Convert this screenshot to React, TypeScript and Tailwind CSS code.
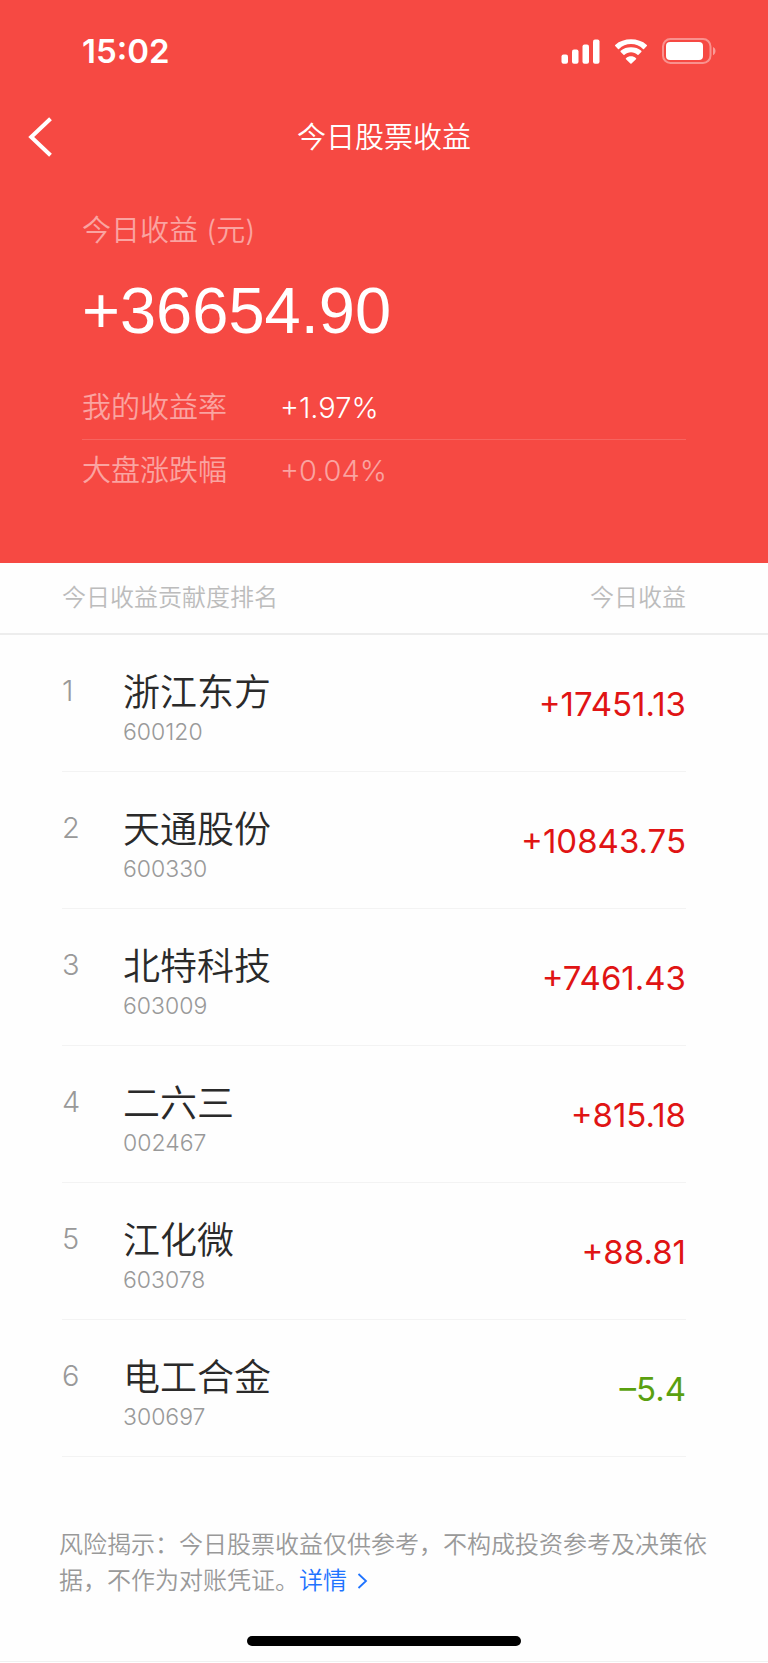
const stocks = [
  { name: '浙江东方', code: '600120', profit: '+17451.13' },
  { name: '天通股份', code: '600330', profit: '+10843.75' },
  { name: '北特科技', code: '603009', profit: '+7461.43' },
  { name: '二六三', code: '002467', profit: '+815.18' },
  { name: '江化微', code: '603078', profit: '+88.81' },
  { name: '电工合金', code: '300697', profit: '–5.4' },
];

const StatusBar = () => {
  return (
    <div className="flex h-[102px] items-center justify-between pr-[52px] pl-[82px]">
      <span className="text-[33px] leading-10 font-semibold">15:02</span>
      <div className="flex items-center gap-[14px]">
        <svg width="39" height="25" viewBox="0 0 39 25" fill="currentColor" aria-hidden="true">
          <rect x="0.5" y="15.5" width="6.5" height="9.2" rx="2" />
          <rect x="11" y="10.5" width="6.5" height="14.2" rx="2" />
          <rect x="21.5" y="5.5" width="6.5" height="19.2" rx="2" />
          <rect x="32" y="0.4" width="6.5" height="24.3" rx="2" />
        </svg>
        <svg width="34" height="25" viewBox="0 0 34 25" fill="currentColor" aria-hidden="true">
          <path d="M17 5.1c4.6 0 8.8 1.8 12 4.8.3.3.7.3 1 0l2.8-2.8c.4-.4.4-.9 0-1.2C28.5 2.1 22.9.3 17 .3S5.5 2.1 1.2 5.9c-.4.3-.4.8 0 1.2L4 9.9c.3.3.7.3 1 0 3.2-3 7.4-4.8 12-4.8z" />
          <path d="M17 13.3c2.5 0 4.8.9 6.5 2.5.3.3.7.3 1 0l2.8-2.8c.4-.4.4-.9 0-1.2C24.5 9.2 20.9 8.2 17 8.2s-7.5 1-10.3 3.6c-.4.3-.4.8 0 1.2l2.8 2.8c.3.3.7.3 1 0 1.7-1.6 4-2.5 6.5-2.5z" />
          <path d="M22 19.2c-2.8-2.5-7.2-2.5-10 0-.4.3-.4.7 0 1.1l4.4 4.2c.3.3.8.3 1.1 0l4.5-4.2c.4-.4.4-.8 0-1.1z" />
        </svg>
        <svg width="54" height="26" viewBox="0 0 54 26" fill="none" aria-hidden="true">
          <rect x="1" y="1" width="47.5" height="24" rx="7.5" stroke="currentColor" strokeOpacity="0.4" strokeWidth="2" />
          <rect x="4" y="4" width="37" height="18" rx="4" fill="currentColor" />
          <path d="M51 9v8.2c1.6-.7 2.5-2.2 2.5-4.1S52.6 9.7 51 9z" fill="currentColor" fillOpacity="0.45" />
        </svg>
      </div>
    </div>
  );
};

const NavBar = () => {
  return (
    <div className="grid h-[70px] grid-cols-[1fr_auto_1fr] items-center px-7">
      <button type="button" aria-label="返回" className="w-fit">
        <svg width="26" height="40" viewBox="0 0 26 40" fill="none" stroke="currentColor" strokeWidth="4" aria-hidden="true">
          <path d="M22.5 1.8L3.2 20l19.3 18.2" />
        </svg>
      </button>
      <h1 className="pt-0.5 text-[29px] leading-10 font-[350]">今日股票收益</h1>
    </div>
  );
};

const Summary = () => {
  return (
    <section className="px-[82px] pt-[39px] pb-[61px] text-[29px] font-[350]">
      <p className="leading-10 text-white/50">今日收益 (元)</p>
      <p className="mt-5 font-['Liberation_Sans',sans-serif] text-[65px] leading-[80px] font-normal">+36654.90</p>
      <dl className="mt-6">
        <div className="flex h-[65px] items-center border-b border-white/15 pt-0.5">
          <dt className="w-[198px] text-white/50">我的收益率</dt>
          <dd>+1.97%</dd>
        </div>
        <div className="flex h-[62px] items-center">
          <dt className="w-[198px] text-white/50">大盘涨跌幅</dt>
          <dd className="text-white/50">+0.04%</dd>
        </div>
      </dl>
    </section>
  );
};

const Ranking = () => {
  return (
    <table className="block font-light">
      <thead className="block border-b-2 border-[#ededed] pr-[82px] pl-[62px] text-[24px] text-[#bcbcbc]">
        <tr className="flex h-[70px] items-center justify-between">
          <th className="font-[350]">今日收益贡献度排名</th>
          <th className="font-[350]">今日收益</th>
        </tr>
      </thead>
      <tbody className="block pr-[82px] pl-[62px]">
        {stocks.map((stock, i) => (
          <tr key={stock.code} className="flex h-[137px] items-center border-b border-[#f3f3f3] pt-1">
            <td className="w-[61px] pb-7 text-[29px] leading-9 text-[#999]">{i + 1}</td>
            <td className="flex-1 pt-2">
              <div className="text-[37px] leading-[46px] font-[350] text-[#2a2a2a]">{stock.name}</div>
              <div className="text-[23px] leading-8 text-[#999]">{stock.code}</div>
            </td>
            <td className={stock.profit.startsWith('+') ? 'text-[33px] font-normal text-[#e01414]' : 'text-[33px] font-normal text-[#5aa00f]'}>
              {stock.profit}
            </td>
          </tr>
        ))}
      </tbody>
    </table>
  );
};

export default function App() {
  return (
    <div className="bg-[#fefefe] font-['Inter','Noto_Sans_CJK_SC',sans-serif]" lang="zh-CN">
      <header className="bg-[#f64943] text-white">
        <StatusBar />
        <NavBar />
        <Summary />
      </header>
      <Ranking />
      <p className="mt-[70px] px-[59px] text-[24px] leading-9 font-[350] text-[#999]">
        风险揭示：今日股票收益仅供参考，不构成投资参考及决策依据，不作为对账凭证。
        <a href="#detail" className="text-[#1e73ff]">
          详情
          <svg className="ml-[10px] inline align-baseline" width="11" height="16" viewBox="0 0 11 16" fill="none" stroke="currentColor" strokeWidth="1.8" aria-hidden="true">
            <path d="M1.5 1L9 8l-7.5 7" />
          </svg>
        </a>
      </p>
      <div className="mx-auto mt-[37px] h-[10px] w-[274px] rounded-full bg-black" />
      <div className="mt-[15px] border-b border-[#f0f0f0]" />
    </div>
  );
}
